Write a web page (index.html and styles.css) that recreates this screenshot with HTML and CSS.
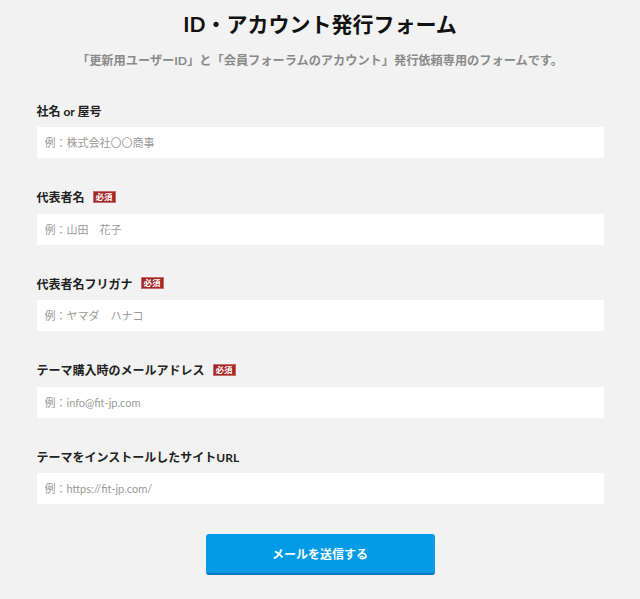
FILE: index.html
```html
<!DOCTYPE html>
<html lang="ja">
<head>
    <meta charset="UTF-8">
    <meta name="viewport" content="width=device-width, initial-scale=1.0">
    <title>ID・アカウント発行フォーム</title>
    <link rel="stylesheet" href="styles.css">
</head>
<body>
    <div class="form-wrap">
        <h1 class="form-title">ID・アカウント発行フォーム</h1>
        <p class="form-lead">「更新用ユーザーID」と「会員フォーラムのアカウント」発行依頼専用のフォームです。</p>

        <form class="form">
            <div class="field">
                <label class="field-label">社名 or 屋号</label>
                <input class="field-input" type="text" placeholder="例：株式会社〇〇商事">
            </div>
            <div class="field">
                <label class="field-label">代表者名 <span class="required">必須</span></label>
                <input class="field-input" type="text" placeholder="例：山田　花子">
            </div>
            <div class="field">
                <label class="field-label">代表者名フリガナ <span class="required">必須</span></label>
                <input class="field-input" type="text" placeholder="例：ヤマダ　ハナコ">
            </div>
            <div class="field">
                <label class="field-label">テーマ購入時のメールアドレス <span class="required">必須</span></label>
                <input class="field-input" type="email" placeholder="例：info@fit-jp.com">
            </div>
            <div class="field">
                <label class="field-label">テーマをインストールしたサイトURL</label>
                <input class="field-input" type="url" placeholder="例：https://fit-jp.com/">
            </div>
            <div class="submit-row">
                <button class="submit-btn" type="button">メールを送信する</button>
            </div>
        </form>
    </div>
</body>
</html>
```

FILE: styles.css
```css
html {
    background-color: #f2f2f2;
}
body {
    margin: 0;
    background-color: #f2f2f2;
    font-family: "Lato", "Noto Sans CJK JP", sans-serif;
    color: #222;
}
.form-wrap {
    max-width: 567px;
    margin: 0 auto;
    padding-top: 10px;
}
.form-title {
    margin: 0;
    font-size: 21px;
    line-height: 28px;
    font-weight: bold;
    text-align: center;
    color: #111;
}
.form-lead {
    margin: 14px 0 0;
    font-size: 12.2px;
    line-height: 18px;
    font-weight: bold;
    text-align: center;
    color: #8a8a8a;
}
.form {
    margin-top: 31px;
}
.field {
    margin-bottom: 29.5px;
}
.field-label {
    display: flex;
    align-items: center;
    gap: 8px;
    height: 18px;
    font-size: 12px;
    font-weight: bold;
    color: #222;
    margin-bottom: 8px;
}
.required {
    display: inline-block;
    background-color: #a32626;
    color: #fff;
    font-size: 8.5px;
    line-height: 10px;
    padding: 0 2px;
    border: 1px solid #c76a6a;
    font-weight: bold;
}
.field-input {
    display: block;
    box-sizing: border-box;
    width: 100%;
    height: 31px;
    border: none;
    background-color: #fff;
    padding: 0 8px;
    font-family: "Lato", "Noto Sans CJK JP", sans-serif;
    font-size: 11px;
    color: #333;
    outline: none;
}
.field-input::placeholder {
    color: #999;
}
.submit-row {
    display: flex;
    justify-content: center;
    margin-top: 30px;
}
.submit-btn {
    width: 229px;
    height: 41px;
    background-color: #039be5;
    border: none;
    border-bottom: 2px solid #0277bd;
    border-radius: 3px;
    color: #fff;
    font-family: "Lato", "Noto Sans CJK JP", sans-serif;
    font-size: 12px;
    font-weight: bold;
    cursor: pointer;
}
```
